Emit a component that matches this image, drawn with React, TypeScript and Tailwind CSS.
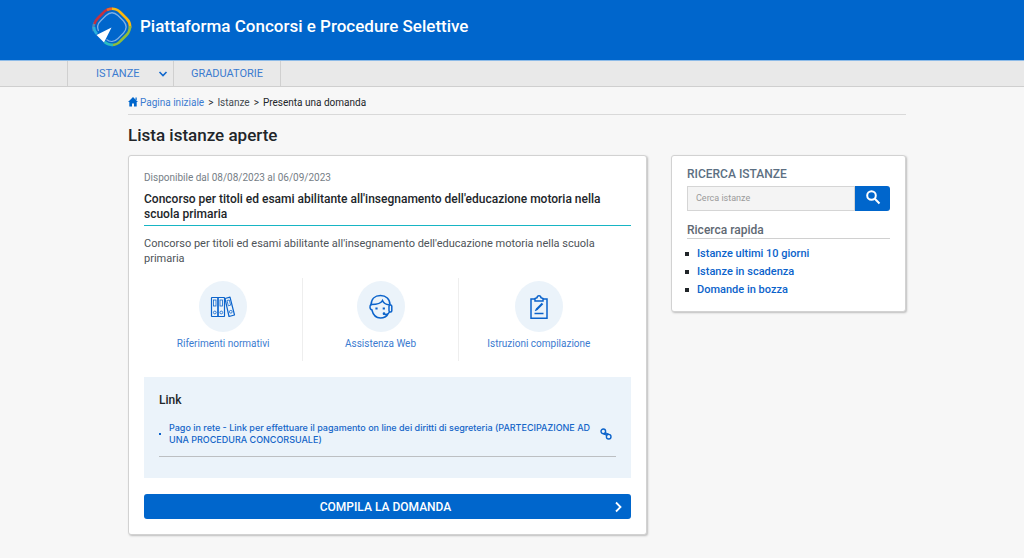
import React, { useState } from "react";

const services = [
  { label: "Riferimenti normativi", icon: <BindersIcon /> },
  { label: "Assistenza Web", icon: <OperatorIcon /> },
  { label: "Istruzioni compilazione", icon: <ClipboardIcon /> },
];

const quickLinks = [
  "Istanze ultimi 10 giorni",
  "Istanze in scadenza",
  "Domande in bozza",
];

function Logo() {
  return (
    <svg width="40" height="40" viewBox="0 0 40 40" fill="none">
      <g strokeWidth="2.600" strokeLinecap="butt">
        <path d="M2 24C1 21 1 18 3 15.500" stroke="#4f87b8" />
        <path d="M2.500 17C3 15 4 13 6 11L11 6C13.500 3 16 1.800 20 1.800" stroke="#c4313f" />
        <path d="M15 3C17 2 18.500 1.800 20.500 1.800" stroke="#e8662c" />
        <path d="M20 1.800C24 1.800 26 3 28.500 5.500L34.500 11.500C37.500 14.500 38.500 17 38 21" stroke="#fbb80f" />
        <path d="M38 19C38 23 37 25.500 34.500 28L28.500 34C26 37 23 38 19.500 38" stroke="#8fbd3a" />
        <path d="M21 38C17.500 38 15 37 12.500 35" stroke="#2bbcc0" />
        <path d="M2 20C2 22.500 3 25 5 27" stroke="#29b0dc" />
      </g>
      <path
        d="M6.500 24C5 20.500 5.500 17 8.500 14L14 8.500C18 4.800 22 4.800 26 8.500L31.500 14C35 18 35 22 31.500 26L26 31.500C22.500 35 18 35.300 14.500 32.500"
        stroke="#7db0e6"
        strokeWidth="1.300"
      />
      <path d="M19.500 20.500L4.500 28L12 35.500Z" fill="#fff" />
    </svg>
  );
}

function BindersIcon() {
  return (
    <svg width="26" height="26" viewBox="0 0 26 26" fill="none" stroke="#0b63cb" strokeWidth="1.200">
      <rect x="1.500" y="3.500" width="6.500" height="19" rx="0.500" />
      <rect x="8" y="3.500" width="6.500" height="19" rx="0.500" />
      <path d="M15 4.500L20 3.200L24.500 21L19 22.500Z" strokeLinejoin="round" />
      <g strokeWidth="0.800">
        <rect x="3.500" y="6" width="2.500" height="6" />
        <rect x="10" y="6" width="2.500" height="6" />
        <path d="M17 6.500L19.300 6L20.600 11.200L18.300 11.800Z" />
        <circle cx="4.800" cy="18.500" r="1.400" />
        <circle cx="11.300" cy="18.500" r="1.400" />
        <circle cx="20.800" cy="17.800" r="1.400" />
      </g>
    </svg>
  );
}

function OperatorIcon() {
  return (
    <svg width="26" height="26" viewBox="0 0 26 26" fill="none" stroke="#0b63cb" strokeWidth="1.500">
      <path d="M3 11.500C3 5 7 1.500 12.500 1.500S22 5 22 11" />
      <path d="M3.200 10.500C1.500 11 1.500 15.500 3.800 15.700C5 20.500 8 24 12.500 24C16 24 18.500 22.500 20 20" />
      <path d="M3.500 10.500C8 10.500 13 9.500 14.500 6.500C15.500 9 18 10.500 21 10.800" />
      <rect x="21" y="11" width="2.800" height="7" rx="1.200" />
      <path d="M21.500 18C20.500 20.200 18.500 20.800 16.500 20.300" />
      <circle cx="16" cy="19.700" r="0.600" fill="#0b63cb" />
      <path d="M8.500 13.500V15.500M15.800 13.500V15.500" strokeWidth="2.200" />
    </svg>
  );
}

function ClipboardIcon() {
  return (
    <svg width="26" height="26" viewBox="0 0 26 26" fill="none" stroke="#0b63cb" strokeWidth="1.500">
      <path d="M9 5H5V24.200H21V5H17" />
      <path d="M9 7V4.500L11 3.800C11.300 1 14.700 1 15 3.800L17 4.500V7Z" />
      <path d="M10.500 15.500L16.500 9.500" strokeWidth="2.200" />
      <path d="M9.300 16.800L11 15" />
      <path d="M8.500 19.500H17.500" />
    </svg>
  );
}

export default function App() {
  const [query, setQuery] = useState("");

  return (
    <div className="min-h-screen bg-[#f7f7f7] font-[Roboto,sans-serif] text-[#212529]">
      <header className="flex h-[60px] items-center gap-2 bg-[#0066cc] pb-1.5 pl-[92px]">
        <Logo />
        <span className="text-[17px] font-medium text-white">
          Piattaforma Concorsi e Procedure Selettive
        </span>
      </header>

      <nav className="flex h-[27px] border-y border-t-[#8dbbe8] border-b-[#cfcfcf] bg-[#e9e9e9] pl-[67px] text-[11px] text-[#3b7bd0]">
        <a href="#istanze" className="flex w-[107px] items-center justify-between border-x border-[#d0d0d0] pl-7 pr-1">
          <span className="pt-0.5">ISTANZE</span>
          <svg width="12" height="12" viewBox="0 0 12 12" fill="none" stroke="#1168cd" strokeWidth="1.600">
            <path d="M2.500 4L6 7.500L9.500 4" />
          </svg>
        </a>
        <a href="#graduatorie" className="flex w-[107px] items-center justify-center border-r border-[#d0d0d0] pt-0.5">
          GRADUATORIE
        </a>
      </nav>

      <main className="ml-32 mr-[118px]">
        <div className="flex h-7 items-center gap-1 border-b border-[#d9d9d9] pt-[3px] text-[10px]">
          <a href="#home" className="flex items-center gap-0.5 text-[#3b7bd0]">
            <svg width="10" height="10" viewBox="0 0 10 10" fill="#0066cc">
              <path d="M5 0L10 5H8.700V9.500H6V6.500H4V9.500H1.300V5H0L5 0Z" />
              <path d="M7.500 0.500H8.700V3H7.500Z" />
            </svg>
            Pagina iniziale
          </a>
          <span>&gt;</span>
          <a href="#istanze" className="text-[#444b52]">Istanze</a>
          <span>&gt;</span>
          <span>Presenta una domanda</span>
        </div>

        <h1 className="flex h-10 items-center pt-0.5 text-[17px] font-medium">Lista istanze aperte</h1>

        <div className="grid grid-cols-[1fr_235px] items-start gap-6">
          <section className="rounded-[3px] border border-[#d2d2d2] bg-white px-[15px] pt-4 pb-[15px] shadow-[1px_1px_2px_#bdbdbd]">
            <p className="text-[10px] leading-3 text-[#767e86]">Disponibile dal 08/08/2023 al 06/09/2023</p>
            <h2 className="mt-2 text-[12px] leading-[15px] font-medium">
              Concorso per titoli ed esami abilitante all'insegnamento dell'educazione motoria nella scuola primaria
            </h2>
            <hr className="mt-[3px] h-px border-0 bg-[#17b5c4]" />
            <p className="mt-2.5 text-[11px] leading-[15px] text-[#4d5358]">
              Concorso per titoli ed esami abilitante all'insegnamento dell'educazione motoria nella scuola primaria
            </p>

            <div className="mt-3 grid grid-cols-[160fr_156fr_161fr] pr-3">
              {services.map((item) => (
                <a
                  key={item.label}
                  href="#servizi"
                  className="flex h-[83px] flex-col items-center border-r border-[#eeeeee] pt-[3px] text-[10px] text-[#3b7bd0] last:border-r-0"
                >
                  <span className="flex h-[51px] w-12 items-center justify-center rounded-[50%] bg-[#ebf3fa]">
                    {item.icon}
                  </span>
                  <span className="mt-1">{item.label}</span>
                </a>
              ))}
            </div>

            <div className="mt-4 bg-[#ebf3fa] px-[15px] pt-[15px] pb-[21px]">
              <h3 className="text-[12px] leading-4 font-medium">Link</h3>
              <div className="mt-3 flex items-center border-b border-[#bcbfc2] pb-2.5 pt-0.5">
                <span className="mr-2 h-0.5 w-0.5 bg-[#0b63cb]"></span>
                <a href="#pago" className="flex-1 font-[Inter,sans-serif] text-[9px] leading-3 font-medium text-[#1465c8]">
                  Pago in rete - Link per effettuare il pagamento on line dei diritti di segreteria (PARTECIPAZIONE AD UNA PROCEDURA CONCORSUALE)
                </a>
                <svg className="mr-1 ml-1" width="12" height="12" viewBox="0 0 12 12" fill="none" stroke="#0b63cb" strokeWidth="1.400">
                  <circle cx="3.300" cy="3.300" r="2.300" />
                  <circle cx="8.700" cy="8.700" r="2.300" />
                  <path d="M3.500 6C5 6.500 6 6 6.200 4.500M5.800 7.500C6 6 7 5.500 8.500 6" />
                </svg>
              </div>
            </div>

            <button
              type="button"
              className="mt-4 grid h-[25px] w-full grid-cols-[16px_1fr_16px] items-center rounded-[3px] bg-[#0066cc] pr-1 text-[12px] font-medium text-white"
            >
              <span className="col-start-2">COMPILA LA DOMANDA</span>
              <svg width="14" height="14" viewBox="0 0 14 14" fill="none" stroke="#fff" strokeWidth="1.800">
                <path d="M5 2.500L9.500 7L5 11.500" />
              </svg>
            </button>
          </section>

          <aside className="rounded-[3px] border border-[#d2d2d2] bg-white px-[15px] pt-2.5 pb-3 shadow-[1px_1px_2px_#bdbdbd]">
            <label htmlFor="search" className="block text-[12px] leading-4 font-medium text-[#5c6f82]">
              RICERCA ISTANZE
            </label>
            <form className="mt-1 flex h-[25px]" onSubmit={(e) => e.preventDefault()}>
              <input
                id="search"
                type="text"
                value={query}
                onChange={(e) => setQuery(e.target.value)}
                placeholder="Cerca istanze"
                className="w-full min-w-0 flex-1 border border-[#d5d5d5] bg-[#f4f4f4] px-2 text-[9px] placeholder:text-[#9a9a9a]"
              />
              <button type="submit" aria-label="Cerca" className="flex w-[35px] items-center justify-center rounded-r-[3px] bg-[#0066cc] pb-1">
                <svg width="16" height="16" viewBox="0 0 16 16" fill="none" stroke="#fff" strokeWidth="2">
                  <circle cx="6.500" cy="6.500" r="4.300" />
                  <path d="M9.800 9.800L14.500 14.500" />
                </svg>
              </button>
            </form>
            <h2 className="mt-[11px] border-b border-[#d0d0d0] text-[12px] leading-4 font-medium text-[#5f6973]">
              Ricerca rapida
            </h2>
            <ul className="mt-1.5 text-[11px] leading-[18px] font-medium text-[#0b63cb]">
              {quickLinks.map((link) => (
                <li key={link} className="flex items-center gap-2">
                  <span className="-ml-0.5 h-1 w-1 bg-[#212529]"></span>
                  <a href="#ricerca">{link}</a>
                </li>
              ))}
            </ul>
          </aside>
        </div>
      </main>
    </div>
  );
}
